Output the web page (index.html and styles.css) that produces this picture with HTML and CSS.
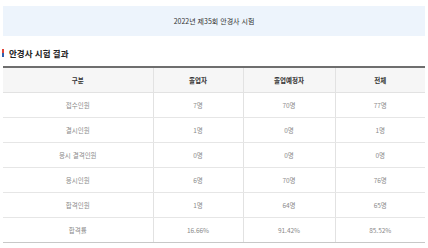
FILE: index.html
```html
<!DOCTYPE html>
<html lang="ko">
<head>
<meta charset="utf-8">
<link rel="stylesheet" href="styles.css">
</head>
<body>
<div class="page">
  <div class="banner">2022년 제35회 안경사 시험</div>
  <h2 class="title"><span class="mark"></span>안경사 시험 결과</h2>
  <table class="result">
    <colgroup>
      <col class="c1"><col class="c2"><col class="c3"><col class="c4">
    </colgroup>
    <thead>
      <tr><th>구분</th><th>졸업자</th><th>졸업예정자</th><th>전체</th></tr>
    </thead>
    <tbody>
      <tr><td>접수인원</td><td>7명</td><td>70명</td><td>77명</td></tr>
      <tr><td>결시인원</td><td>1명</td><td>0명</td><td>1명</td></tr>
      <tr><td>응시 결격인원</td><td>0명</td><td>0명</td><td>0명</td></tr>
      <tr><td>응시인원</td><td>6명</td><td>70명</td><td>76명</td></tr>
      <tr><td>합격인원</td><td>1명</td><td>64명</td><td>65명</td></tr>
      <tr class="last"><td>합격률</td><td>16.66%</td><td>91.42%</td><td>85.52%</td></tr>
    </tbody>
  </table>
</div>
</body>
</html>
```

FILE: styles.css
```css
html, body {
  margin: 0;
  padding: 0;
  background: #fff;
}
body {
  font-family: "Noto Sans CJK KR", "Noto Sans", sans-serif;
}
.page {
  padding: 6px 3px 0 3px;
}
.banner {
  height: 30px;
  background: #edf4fc;
  color: #333;
  font-size: 7px;
  display: flex;
  align-items: center;
  justify-content: center;
}
.title {
  margin: 10px 0 0 -1px;
  height: 14px;
  display: flex;
  align-items: center;
  gap: 5px;
  font-size: 8.5px;
  font-weight: 700;
  color: #222;
}
.mark {
  width: 2px;
  height: 8px;
  background: linear-gradient(#e0463a 0 50%, #2f5fb0 50% 100%);
}
.result {
  margin-top: 6px;
  width: 100%;
  border-collapse: collapse;
  table-layout: fixed;
  border-top: 2px solid #6e6e6e;
  font-size: 6.5px;
}
.c1 { width: 150px; }
.c2 { width: 90px; }
.c3 { width: 92px; }
.result th {
  height: 24px;
  background: #f6f6f6;
  color: #333;
  font-weight: 700;
  padding: 0;
  border-bottom: 1px solid #e2e2e2;
  border-left: 1px solid #e2e2e2;
}
.result td {
  height: 24px;
  padding: 0;
  text-align: center;
  color: #8a8a8a;
  border-bottom: 1px solid #e6e6e6;
  border-left: 1px solid #e2e2e2;
}
.result th:first-child,
.result td:first-child {
  border-left: none;
}
.result tr.last td {
  border-bottom: 1px solid #c8c8c8;
}
```
